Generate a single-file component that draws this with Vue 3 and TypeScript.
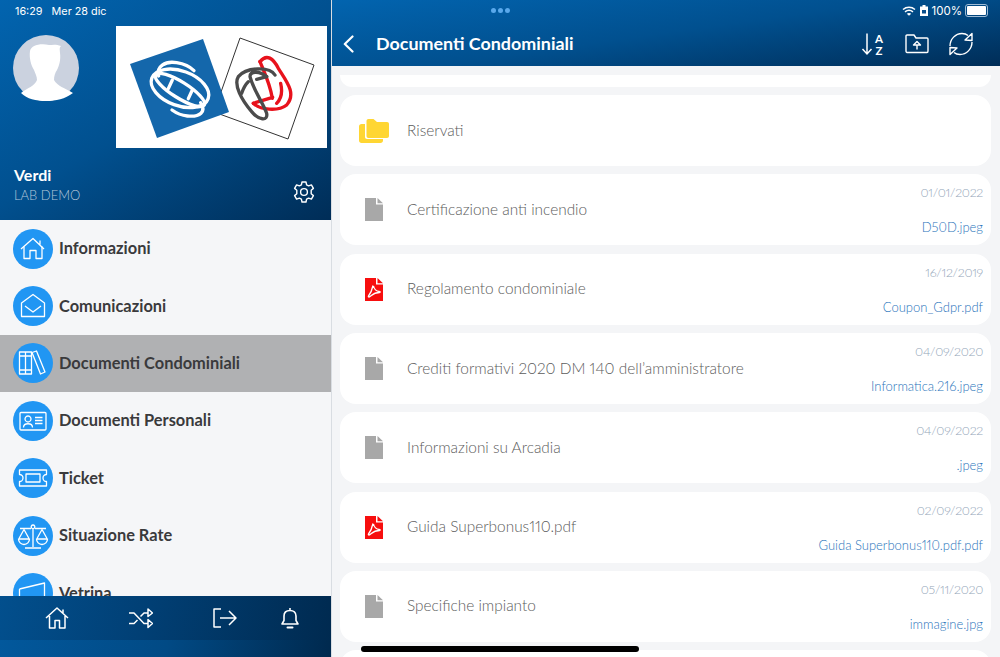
<template>
  <div class="screen">
    <aside class="side">
      <header class="profile">
        <div class="status-left">16:29&nbsp;&nbsp;&nbsp;Mer 28 dic</div>
        <div class="profile-top">
          <svg class="avatar" width="66" height="66" viewBox="0 0 66 66">
            <circle cx="33" cy="33" r="33" fill="#cbd2df" />
            <path d="M17 16C18 11 26 8 36 10C39 10 43 9 48 11C46 13 47 15 47 18C48 25 46 31 44 35C42 38 41 41 41 45C44 51 52 53 60 58C52 64 43 66 33 66C23 66 14 64 8 58C14 53 22 51 24 45C24 41 22 38 21 35C18 30 16 23 17 16Z" fill="#fff" />
          </svg>
          <svg class="logo" width="211" height="122" viewBox="0 0 211 122">
            <rect width="211" height="122" fill="#fff" />
            <path d="M124 12L198 39L172 113L98 86Z" fill="none" stroke="#333" stroke-width="1" />
            <path d="M14 38L87 13L113 86L41 112Z" fill="#1467ab" />
            <!-- coordinates below are 3x, same scale as the crop I measured from -->
            <g transform="translate(-6 -6) scale(.3333)" fill="none" stroke-width="10" stroke-linecap="round">
              <g stroke="#fff">
                <ellipse cx="210" cy="205" rx="90" ry="52" transform="rotate(20 210 205)" />
                <ellipse cx="210" cy="210" rx="86" ry="24" transform="rotate(32 210 210)" />
                <path d="M146 168C138 140 165 122 200 128C225 132 240 140 252 152" />
                <path d="M272 248C290 275 270 292 232 288C212 286 200 280 186 270" />
                <path d="M187 180L175 206M247 210L235 236" />
              </g>
              <g stroke="#e8121c">
                <path d="M450 125C470 100 490 115 505 145C530 185 560 220 530 255C505 275 450 270 430 250" />
                <path d="M450 125C460 150 480 190 487 235M512 190C518 215 515 235 500 250M430 250L488 232" />
              </g>
              <g stroke="#4b4b4b">
                <path d="M495 165C480 140 410 140 385 170C370 195 395 240 425 275C445 300 475 305 470 280C460 250 430 210 420 170C420 155 445 150 470 170" />
                <path d="M395 220C400 205 405 195 415 185M440 178L470 170" />
              </g>
            </g>
          </svg>
        </div>
        <div class="profile-bottom">
          <div>
            <div class="name">Verdi</div>
            <div class="org">LAB DEMO</div>
          </div>
          <svg class="gear" width="24" height="24" viewBox="0 0 24 24" fill="none" stroke="#fff" stroke-width="1.4" stroke-linejoin="round">
            <circle cx="12" cy="12" r="3.4" />
            <path d="M10 2H14L14.6 4.9L16.6 5.9L19.4 4.9L21.4 8.4L19.2 10.3V13.7L21.4 15.6L19.4 19.1L16.6 18.1L14.6 19.1L14 22H10L9.4 19.1L7.4 18.1L4.6 19.1L2.6 15.6L4.8 13.7V10.3L2.6 8.4L4.6 4.9L7.4 5.9L9.4 4.9Z" />
          </svg>
        </div>
      </header>

      <nav class="menu">
        <div v-for="item in menu" :key="item.label" class="menu-row" :class="{ active: item.active }">
          <svg class="menu-icon" width="40" height="40" viewBox="0 0 40 40">
            <circle cx="20" cy="20" r="20" fill="#2196f3" />
            <path v-for="d in item.paths" :key="d" :d="d" fill="none" stroke="#fff" stroke-width="1.3" stroke-linejoin="round" />
          </svg>
          <span class="menu-label">{{ item.label }}</span>
        </div>
      </nav>

      <footer class="side-foot">
        <div class="foot-bar">
          <svg width="24" height="24" viewBox="0 0 24 24" fill="none" stroke="#fff" stroke-width="1.5" stroke-linejoin="round">
            <path d="M1 12L12 2L23 12M18 3.5V7.5M4.5 10V22H10V14.5H14.5V22H20V10" />
          </svg>
          <svg width="24" height="22" viewBox="0 0 24 22" fill="none" stroke="#fff" stroke-width="1.5" stroke-linejoin="round">
            <path d="M0 6H5L15 16.5H19M0 16.5H5L8.5 13M11.5 9.5L15 6H19M19 2L23.5 6L19 9.5ZM19 12.5L23.5 16.5L19 20.5Z" />
          </svg>
          <svg width="24" height="22" viewBox="0 0 24 22" fill="none" stroke="#fff" stroke-width="1.5" stroke-linejoin="round">
            <path d="M8 2H1V20H8M7 11H23M16 4L23 11L16 18" />
          </svg>
          <svg width="20" height="22" viewBox="0 0 20 22" fill="none" stroke="#fff" stroke-width="1.6" stroke-linejoin="round">
            <path d="M2 17H18L16 13.5V9C16 5.5 13.5 3.5 10 3.5C6.5 3.5 4 5.5 4 9V13.5ZM10 1V3.5" />
            <path d="M7.5 20.5H12.5" stroke-width="2" stroke-linecap="round" />
          </svg>
        </div>
        <div class="foot-safe"></div>
      </footer>
    </aside>

    <main class="main">
      <header class="top">
        <div class="status">
          <div class="dots"><i></i><i></i><i></i></div>
          <div class="status-right">
            <svg width="14" height="10" viewBox="0 0 14 10" fill="none" stroke="#fff" stroke-width="1.5">
              <path d="M1 3.5C4.5 .5 9.5 .5 13 3.5M3 5.8C5.5 3.8 8.5 3.8 11 5.8" />
              <path d="M7 9.8L4.8 7.7C6 6.7 8 6.7 9.2 7.7Z" fill="#fff" stroke="none" />
            </svg>
            <svg width="8" height="11" viewBox="0 0 8 11">
              <path d="M2.5 0H5.5V1.5H8V11H0V1.5H2.5Z" fill="#fff" />
              <rect x="2" y="5" width="4" height="3.5" fill="#0a4f8c" />
            </svg>
            <span>100%</span>
            <span class="battery"><b></b></span>
          </div>
        </div>
        <div class="bar">
          <svg class="back" width="11" height="18" viewBox="0 0 11 18" fill="none" stroke="#fff" stroke-width="2.2" stroke-linecap="round" stroke-linejoin="round">
            <path d="M9.5 1.5L1.8 9L9.5 16.5" />
          </svg>
          <h1 class="title">Documenti Condominiali</h1>
          <div class="actions">
            <svg class="sort" width="24" height="24" viewBox="0 0 24 24" fill="none" stroke="#fff" stroke-width="1.5">
              <path d="M6 1.5V22M1.5 17L6 22L10.5 17" />
              <text x="18" y="10.5" class="az">A</text>
              <text x="18" y="22.5" class="az">Z</text>
            </svg>
            <svg width="24" height="20" viewBox="0 0 24 20" fill="none" stroke="#fff" stroke-width="1.4" stroke-linejoin="round">
              <path d="M1 2C1 1.5 1.5 1 2 1H9L11 4H22C22.5 4 23 4.5 23 5V17C23 18 22.5 18.5 22 18.5H2C1.5 18.5 1 18 1 17Z" />
              <path d="M8.5 11L12 7.5L15.5 11ZM12 11V15.5" />
            </svg>
            <svg width="24" height="24" viewBox="0 0 24 24" fill="none" stroke="#fff" stroke-width="1.4" stroke-linejoin="round">
              <path d="M1 14C1 7 6.500 1.500 13 1.500C15.500 1.500 17.500 2.200 19 3.500M23 10C23 17 17.500 22.500 11 22.500C8.500 22.500 6.500 21.800 5 20.500" />
              <path d="M16 8L23 1.500V8.500ZM8 16L1 22.500V15.500Z" />
            </svg>
          </div>
        </div>
      </header>

      <section class="list">
        <div class="stub"></div>
        <article v-for="doc in docs" :key="doc.title" class="card">
          <div class="card-icon">
            <svg v-if="doc.kind === 'folder'" width="30" height="24" viewBox="0 0 30 24">
              <path d="M6 5H2.5C1 5 0 6 0 7.5V21.5C0 23 1 24 2.5 24H21.5C23 24 24 23 24 21.5V20H8C6.8 20 6 19.2 6 18Z" fill="#ffd633" />
              <path d="M7.5 2C7.5 .8 8.3 0 9.5 0H14.5L18 3H28C29.2 3 30 3.8 30 5V17C30 18.2 29.2 19 28 19H9.5C8.3 19 7.5 18.2 7.5 17Z" fill="#ffd633" />
            </svg>
            <svg v-else width="18" height="23" viewBox="0 0 18 23">
              <path d="M0 0H11V6.5H18V23H0Z" :fill="doc.kind === 'pdf' ? '#f70e0e' : '#a8a8a8'" />
              <path d="M12.5 0L18 5.3H12.5Z" :fill="doc.kind === 'pdf' ? '#f70e0e' : '#a8a8a8'" />
              <path v-if="doc.kind === 'pdf'" d="M8 7.5C7.5 10 6.5 14 3.5 18C3 19 4 19.5 5 18.5C7 17 9 14.5 14.5 14.5C15.5 14.5 15.5 13.5 14 13.5C11.5 13.5 9 11 8.5 8" fill="none" stroke="#fff" stroke-width="1.3" />
            </svg>
          </div>
          <div class="card-title">{{ doc.title }}</div>
          <div class="card-meta">
            <span class="date">{{ doc.date }}</span>
            <span class="file">{{ doc.file }}</span>
          </div>
        </article>
        <div class="card"></div>
      </section>
    </main>

    <div class="home-bar"></div>
  </div>
</template>

<script setup lang="ts">
interface MenuItem {
  label: string
  paths: string[]
  active?: boolean
}

interface Doc {
  kind: 'folder' | 'file' | 'pdf'
  title: string
  date?: string
  file?: string
}

const menu: MenuItem[] = [
  {
    label: 'Informazioni',
    paths: ['M8 20L20 9.5L31 20M27 11.5V15.5', 'M11 17.5V29.5H17V21.5H23V29.5H29V17.5'],
  },
  {
    label: 'Comunicazioni',
    paths: ['M8.5 17L20 8.5L31.5 17V30.5H8.5Z', 'M12 20L20 26L28 20'],
  },
  {
    label: 'Documenti Condominiali',
    active: true,
    paths: [
      'M6.5 9H12.5V31H6.5ZM12.5 9H18.5V31H12.5Z',
      'M6.5 13H18.5M6.5 27H18.5',
      'M19 9.5L23.5 8L32 29L27.5 31Z',
    ],
  },
  {
    label: 'Documenti Personali',
    paths: [
      'M8 11.5H32C32.5 11.5 33 12 33 12.5V28C33 28.5 32.5 29 32 29H8C7.5 29 7 28.5 7 28V12.5C7 12 7.5 11.5 8 11.5Z',
      'M15 15A3 3 0 1 0 15.01 15M10.5 26.5C10.5 21.5 19.5 21.5 19.5 26.5',
      'M22 16.5H29.5M22 19.5H29.5M22 22.5H29.5',
    ],
  },
  {
    label: 'Ticket',
    paths: [
      'M6.5 12H33.5V16.5A3.5 3.5 0 0 0 33.5 23.5V28H6.5V23.5A3.5 3.5 0 0 0 6.5 16.5Z',
      'M13 16H27V24H13Z',
    ],
  },
  {
    label: 'Situazione Rate',
    paths: [
      'M20 12V31M12 32H28M7 12.5H18M22 12.5H33M20 9A1.8 1.8 0 1 0 20.01 9',
      'M5.5 23H16.5A5.5 5.5 0 0 1 5.5 23ZM6 22.5L11 13.5L16 22.5',
      'M23.5 23H34.5A5.5 5.5 0 0 1 23.5 23ZM24 22.5L29 13.5L34 22.5',
    ],
  },
  {
    label: 'Vetrina',
    paths: ['M6.5 16L31.5 10V30M6.5 16V30H31.5'],
  },
]

const docs: Doc[] = [
  { kind: 'folder', title: 'Riservati' },
  { kind: 'file', title: 'Certificazione anti incendio', date: '01/01/2022', file: 'D50D.jpeg' },
  { kind: 'pdf', title: 'Regolamento condominiale', date: '16/12/2019', file: 'Coupon_Gdpr.pdf' },
  { kind: 'file', title: 'Crediti formativi 2020 DM 140 dell’amministratore', date: '04/09/2020', file: 'Informatica.216.jpeg' },
  { kind: 'file', title: 'Informazioni su Arcadia', date: '04/09/2022', file: '.jpeg' },
  { kind: 'pdf', title: 'Guida Superbonus110.pdf', date: '02/09/2022', file: 'Guida Superbonus110.pdf.pdf' },
  { kind: 'file', title: 'Specifiche impianto', date: '05/11/2020', file: 'immagine.jpg' },
]
</script>

<style>
html,
body {
  margin: 0;
  height: 100%;
  overflow: hidden;
  background: #f4f5f7;
}
</style>

<style scoped>
.screen {
  position: relative;
  display: flex;
  width: 1000px;
  height: 657px;
  overflow: hidden;
  font-family: Lato, "Open Sans", sans-serif;
  font-variant-numeric: proportional-nums;
  background: #f4f5f7;
}

/* sidebar */
.side {
  display: flex;
  flex-direction: column;
  width: 331px;
  flex-shrink: 0;
  background: #f5f6f8;
  border-right: 1px solid #d9dde2;
}

.profile {
  height: 220px;
  box-sizing: border-box;
  padding: 5px 15px 0 14px;
  color: #fff;
  background: linear-gradient(150deg, #0264af 0%, #01508f 50%, #002d57 100%);
}

.status-left {
  font-family: Inter, sans-serif;
  font-size: 10.8px;
  line-height: 14px;
  margin-left: 1px;
}

.profile-top {
  display: flex;
  justify-content: space-between;
  margin-right: -11px;
  margin-top: 7px;
}

.avatar {
  margin-top: 9px;
  margin-left: -1px;
}

.profile-bottom {
  display: flex;
  justify-content: space-between;
  align-items: flex-end;
  margin-top: 16px;
}

.name {
  font-size: 16px;
  font-weight: 700;
  line-height: 22px;
}

.org {
  font-size: 13px;
  font-weight: 300;
  line-height: 18px;
  color: #b3c6da;
}

.gear {
  margin-right: 0;
}

.menu {
  flex: 1;
  min-height: 0;
  overflow: hidden;
}

.menu-row {
  display: flex;
  align-items: center;
  gap: 6px;
  height: 57.4px;
  padding-left: 13px;
}

.menu-row.active {
  background: #b0b1b3;
}

.menu-icon {
  flex-shrink: 0;
}

.menu-label {
  margin-top: -2px;
  font-size: 16.4px;
  font-weight: 700;
  color: #3a3a3c;
  white-space: nowrap;
}

.side-foot {
  flex-shrink: 0;
}

.foot-bar {
  display: grid;
  grid-template-columns: 84px 84px 84px 47px;
  justify-items: center;
  align-items: center;
  height: 44px;
  padding-left: 14.5px;
  background: linear-gradient(100deg, #024f8d 0%, #013f74 45%, #002a50 100%);
}

.foot-safe {
  height: 17px;
  background: linear-gradient(100deg, #02589c 0%, #014a85 50%, #00294e 100%);
}

/* main */
.main {
  flex: 1;
  min-width: 0;
  display: flex;
  flex-direction: column;
}

.top {
  height: 66px;
  flex-shrink: 0;
  color: #fff;
  background: linear-gradient(172deg, #0264af 0%, #01508f 50%, #002d57 100%);
}

.status {
  display: flex;
  justify-content: space-between;
  align-items: center;
  height: 21px;
  padding: 0 12px 0 0;
}

.dots {
  display: flex;
  gap: 2px;
  margin-left: 159px;
}

.dots i {
  width: 5px;
  height: 5px;
  border-radius: 50%;
  background: #5aa9ec;
}

.status-right {
  display: flex;
  align-items: center;
  gap: 4px;
  font-family: Inter, sans-serif;
  font-size: 11.5px;
}

.battery {
  display: block;
  width: 19px;
  height: 9px;
  padding: 1px;
  border: 1px solid #9fbcd6;
  border-radius: 3px;
  margin-left: -1px;
}

.battery b {
  display: block;
  height: 100%;
  background: #fff;
  border-radius: 1px;
}

.bar {
  display: flex;
  align-items: center;
  height: 45px;
  padding-left: 11px;
}

.back {
  flex-shrink: 0;
}

.title {
  margin: -2px 0 0 22px;
  font-size: 17.9px;
  font-weight: 700;
  line-height: 26px;
}

.actions {
  display: flex;
  align-items: center;
  gap: 20px;
  margin-left: auto;
  margin-right: 27px;
}

.sort {
  overflow: visible;
}

.az {
  font-family: Lato, sans-serif;
  font-size: 11.5px;
  font-weight: 700;
  fill: #fff;
  stroke: none;
  text-anchor: middle;
}

.list {
  flex: 1;
  min-height: 0;
  overflow: hidden;
  display: flex;
  flex-direction: column;
  gap: 8.33px;
  padding: 9px 9px 0 8px;
}

.stub {
  flex: 0 0 11.7px;
  background: #fff;
  border-radius: 0 0 16px 16px;
}

.card {
  flex: 0 0 71px;
  display: flex;
  align-items: center;
  background: #fff;
  border-radius: 16px;
  position: relative;
}

.card-icon {
  flex: 0 0 67px;
  display: flex;
  justify-content: center;
}

.card-title {
  flex: 1;
  margin-top: -2px;
  font-size: 15.4px;
  font-weight: 300;
  color: #5c5c5c;
  white-space: nowrap;
}

.card-meta {
  display: flex;
  flex-direction: column;
  align-items: flex-end;
  justify-content: space-between;
  align-self: stretch;
  padding: 11px 8px 10px 0;
  font-size: 13px;
  font-weight: 300;
  line-height: 16px;
}

.date {
  font-size: 12.5px;
  letter-spacing: -0.3px;
  color: #93a5b8;
}

.file {
  color: #2a74bb;
}

.home-bar {
  position: absolute;
  left: 361px;
  bottom: 5px;
  width: 278px;
  height: 6px;
  border-radius: 3px;
  background: #000;
}
</style>
